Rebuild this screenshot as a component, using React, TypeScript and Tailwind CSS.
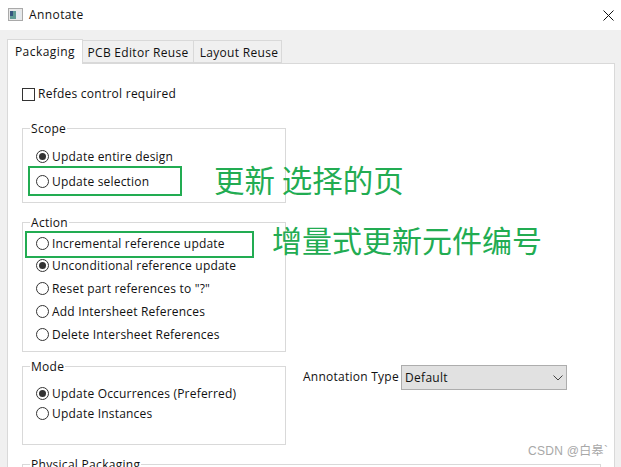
const ui = { fontFamily: '"Open Sans", "Noto Sans", sans-serif' };
const cjk = { fontFamily: '"Noto Sans CJK SC", sans-serif', fontWeight: 400 };

function Radio({ label, checked = false }: { label: string; checked?: boolean }) {
  return (
    <div className="flex items-center h-[23px] pl-[13px]">
      <span className="w-[13px] h-[13px] rounded-full border border-[#333333] bg-white flex items-center justify-center shrink-0">
        {checked && <span className="w-[7px] h-[7px] rounded-full bg-[#333333]" />}
      </span>
      <span className="ml-[3px] text-[12px] leading-[16px] tracking-[0.2px] text-[#111111] whitespace-nowrap">{label}</span>
    </div>
  );
}

function Group({ title, className, children }: { title: string; className: string; children?: React.ReactNode }) {
  return (
    <fieldset className={`border border-[#d9d9d9] ${className}`}>
      <legend className="ml-[7px] px-[1px] pt-[2px] text-[12px] leading-[16px] tracking-[0.3px] text-[#111111]">{title}</legend>
      {children}
    </fieldset>
  );
}

function Tab({ label, active = false, className = "" }: { label: string; active?: boolean; className?: string }) {
  return active ? (
    <div className={`h-[25px] -mb-px relative z-10 bg-white border border-b-0 border-[#d9d9d9] flex items-center justify-center text-[12px] tracking-[0.45px] text-[#111111] ${className}`}>{label}</div>
  ) : (
    <div className={`h-[23px] pt-[2px] bg-[#f0f0f0] border border-l-0 border-[#d9d9d9] flex items-center justify-center text-[12px] tracking-[0.3px] text-[#111111] ${className}`}>{label}</div>
  );
}

export default function App() {
  return (
    <div className="relative w-[621px] h-[467px] overflow-hidden bg-[#f0f0f0] flex flex-col" style={ui}>
      <div className="h-[30px] bg-white flex items-center pl-[8px] pr-[6px] shrink-0">
        <svg width="15" height="13" viewBox="0 0 15 13" className="shrink-0 -mt-[2px]">
          <rect x="0.5" y="0.5" width="14" height="12" fill="#e8e8e8" stroke="#a9a9a9" />
          <rect x="2" y="3" width="6" height="8" fill="#5f9a94" />
          <rect x="8" y="3" width="5" height="8" fill="#e3e9ee" />
          <rect x="2" y="3" width="3" height="5" fill="#34557f" />
        </svg>
        <span className="ml-[6px] text-[12px] tracking-[0.4px] text-[#111111]">Annotate</span>
        <svg width="11" height="11" viewBox="0 0 11 11" className="ml-auto mr-[1px]">
          <path d="M0.5 0.5 L10.5 10.5 M10.5 0.5 L0.5 10.5" stroke="#111111" strokeWidth="1" fill="none" />
        </svg>
      </div>
      <div className="flex-1 pl-[7px] pr-[6px] pt-[9px] flex flex-col min-h-0">
        <div className="flex items-end h-[24px] shrink-0">
          <Tab label="Packaging" active className="w-[76px]" />
          <Tab label="PCB Editor Reuse" className="w-[111px]" />
          <Tab label="Layout Reuse" className="w-[88px] pl-[3px]" />
        </div>
        <div className="flex-1 bg-white border border-[#d9d9d9] pl-[14px] pr-[13px]">
          <div className="flex items-center h-[16px] mt-[22px]">
            <span className="w-[13px] h-[13px] border border-[#333333] bg-white shrink-0" />
            <span className="ml-[3px] text-[12px] leading-[16px] tracking-[0.25px] text-[#111111]">Refdes control required</span>
          </div>
          <Group title="Scope" className="w-[264px] mt-[17px] h-[84px] pt-[8px]">
            <Radio label="Update entire design" checked />
            <div className="h-[2px]" />
            <Radio label="Update selection" />
          </Group>
          <Group title="Action" className="w-[264px] mt-[10px] h-[139px] pt-[1px]">
            <Radio label="Incremental reference update" />
            <div className="-mt-px">
              <Radio label="Unconditional reference update" checked />
            </div>
            <Radio label="Reset part references to &quot;?&quot;" />
            <Radio label="Add Intersheet References" />
            <Radio label="Delete Intersheet References" />
          </Group>
          <div className="flex mt-[5px] items-start">
            <Group title="Mode" className="w-[264px] h-[88px] pt-[7px] shrink-0">
              <Radio label="Update Occurrences (Preferred)" checked />
              <div className="-mt-[3px]">
                <Radio label="Update Instances" />
              </div>
            </Group>
            <div className="flex items-center ml-[17px] mt-[8px]">
              <span className="mb-[2px] text-[12px] tracking-[0.25px] text-[#111111] whitespace-nowrap w-[98px]">Annotation Type</span>
              <div className="w-[166px] h-[25px] bg-[#e1e1e1] border border-[#adadad] flex items-center pl-[3px] pr-[3px] text-[12px] tracking-[0.3px] text-[#111111]">
                Default
                <svg width="10" height="6" viewBox="0 0 10 6" className="ml-auto">
                  <path d="M0.5 0.5 L5 5 L9.5 0.5" stroke="#444444" fill="none" />
                </svg>
              </div>
            </div>
          </div>
          <Group title="Physical Packaging" className="mt-[10px] h-[60px]" />
        </div>
      </div>

      <div className="absolute left-[28px] top-[166px] w-[154px] h-[30px] border-2 border-[#22ac52]" />
      <div className="absolute left-[25px] top-[231px] w-[229px] h-[27px] border-2 border-[#22ac52]" />
      <div className="absolute left-[214px] top-[159px] text-[30.5px] leading-[40px] text-[#22ac52] whitespace-nowrap" style={cjk}>更新 选择的页</div>
      <div className="absolute left-[272px] top-[219px] text-[30px] leading-[40px] text-[#22ac52] whitespace-nowrap" style={cjk}>增量式更新元件编号</div>
      <div className="absolute left-[528px] top-[442px] text-[12px] leading-[18px] text-[#a8a8a8] tracking-[0.3px] whitespace-nowrap" style={{ fontFamily: '"Liberation Sans", "Noto Sans CJK SC", sans-serif' }}>CSDN @白皋`</div>
    </div>
  );
}
